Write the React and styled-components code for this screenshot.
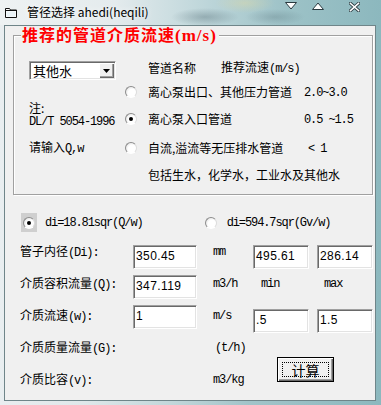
import React from 'react'
import styled, { createGlobalStyle } from 'styled-components'

const CJK = `"Noto Sans CJK SC", "Noto Sans", sans-serif`
const MONO = `"Liberation Mono", "DejaVu Sans Mono", monospace`

const GlobalStyle = createGlobalStyle`
  html, body { margin: 0; padding: 0; background: #8fb9bf; }
  body { font-family: ${CJK}; font-size: 12px; color: #000; }
`

const Window = styled.div`
  width: 381px;
  height: 405px;
  display: flex;
  flex-direction: column;
  overflow: hidden;
  background: linear-gradient(90deg, #e9eef0 0%, #dfe8ea 22%, #c2d7da 45%, #a2c4c9 65%, #8cb8be 100%);
`

const TitleBar = styled.div`
  height: 25px;
  flex: none;
  display: flex;
  align-items: flex-start;
  padding-left: 5px;
  background:
    radial-gradient(ellipse 34px 9px at 205px 17px, rgba(70, 95, 105, 0.35), transparent),
    radial-gradient(ellipse 30px 8px at 275px 17px, rgba(70, 95, 105, 0.25), transparent),
    radial-gradient(ellipse 30px 10px at 245px 3px, rgba(230, 220, 160, 0.4), transparent),
    linear-gradient(90deg, #eef2f3 0%, #e4ebed 30%, #bcd5d9 55%, #9dc2c7 75%, #8cb8be 100%);
`

const AppIcon = styled.svg`
  margin-top: 7px;
  flex: none;
`

const Title = styled.span`
  margin-left: 10px;
  margin-top: 4px;
  font-family: ${CJK};
  font-size: 12px;
  line-height: 16px;
  color: #000;
  text-shadow: 0 0 6px rgba(255, 255, 255, 0.9);
`

const Caption = styled.div`
  margin-left: auto;
  margin-right: 21px;
  margin-top: 2px;
  display: flex;
  align-items: flex-start;
  gap: 15px;
`

const CaptionGlyph = styled.svg`
  display: block;
  margin-left: ${p => p.$ml || 0}px;
`

const Client = styled.div`
  flex: 1;
  margin: 0 5px 4px 4px;
  border: 1px solid #6f8589;
  background: #f0f0f0;
  display: flex;
  flex-direction: column;
`

const Group = styled.fieldset`
  margin: 0 2px 0 8px;
  padding: 0 0 6px 0;
  border: 1px solid #a0a0a0;
  box-shadow: inset 1px 1px 0 #fff, 1px 1px 0 #fff;
  min-width: 0;
`

const Legend = styled.legend`
  margin-left: 7px;
  padding: 0 2px 0 1px;
  line-height: 16px;
  color: #ff0000;
  font-family: ${CJK};
  font-weight: 700;
  font-size: 16px;
  letter-spacing: 1px;
  background: #f0f0f0;
`

const LegendUnit = styled.span`
  font-family: "Liberation Serif", serif;
  font-weight: 700;
  font-size: 17px;
  letter-spacing: 1px;
`

const SpeedGrid = styled.div`
  margin: 12px 0 0 15px;
  display: grid;
  grid-template-columns: 96px 23px 156px 1fr;
  grid-template-rows: 24px 24px 30px 28px 26px;
  align-items: center;
`

const ComboCell = styled.div`
  grid-column: 1;
  grid-row: 1;
  align-self: end;
`

const Combo = styled.div`
  width: 87px;
  height: 19px;
  box-sizing: border-box;
  display: flex;
  align-items: center;
  background: #fff;
  border: 1px solid;
  border-color: #a0a0a0 #fff #fff #a0a0a0;
  box-shadow: inset 1px 1px 0 #696969, inset -1px -1px 0 #e3e3e3;
`

const ComboText = styled.span`
  flex: 1;
  padding-left: 3px;
  font-size: 13px;
  line-height: 15px;
`

const ComboButton = styled.span`
  width: 15px;
  height: 15px;
  margin-right: 1px;
  box-sizing: border-box;
  display: flex;
  align-items: center;
  justify-content: center;
  background: #f0f0f0;
  box-shadow: inset 1px 1px 0 #fff, inset -1px -1px 0 #696969, inset -2px -2px 0 #a0a0a0;
`

const Header = styled.div`
  grid-column: 3 / 5;
  grid-row: 1;
  display: flex;
  gap: 25px;
  align-items: center;
`

const Text = styled.span`
  grid-column: ${p => p.$col || 'auto'};
  grid-row: ${p => p.$row || 'auto'};
  padding-left: ${p => p.$pl || 0}px;
  font-family: ${CJK};
  font-size: 12px;
  line-height: 14px;
  white-space: nowrap;
`

const Ascii = styled.span`
  font-family: ${MONO};
  font-size: 12px;
  letter-spacing: -1.1px;
`

const Note = styled.div`
  grid-column: 1;
  grid-row: 2 / 4;
  align-self: end;
  margin-bottom: 5px;
  display: flex;
  flex-direction: column;
  line-height: 14px;
`

const Radio = styled.span`
  grid-column: ${p => p.$col || 'auto'};
  grid-row: ${p => p.$row || 'auto'};
  margin-left: ${p => p.$ml || 0}px;
  width: 12px;
  height: 12px;
  box-sizing: border-box;
  border-radius: 50%;
  border: 1px solid;
  border-color: #8c8c8c #dcdcdc #fff #8c8c8c;
  background: radial-gradient(circle at 60% 60%, #fff 0 45%, #e4e4e4 80%);
  display: inline-flex;
  align-items: center;
  justify-content: center;
  flex: none;

  &::after {
    content: '';
    width: 4px;
    height: 4px;
    border-radius: 50%;
    background: #000;
    display: ${p => (p.$on ? 'block' : 'none')};
  }
`

const FormulaRow = styled.div`
  margin-top: 18px;
  padding-left: 16px;
  display: flex;
  align-items: center;
  height: 19px;
`

const FocusBox = styled.span`
  width: 16px;
  height: 19px;
  background: #cfcfcf;
  display: flex;
  align-items: center;
  justify-content: center;
`

const Formula = styled.span`
  margin-left: ${p => p.$ml}px;
  font-family: ${MONO};
  font-size: 12px;
  letter-spacing: -1.1px;
  white-space: nowrap;
`

const FormGrid = styled.div`
  margin-top: 4px;
  padding-left: 15px;
  display: grid;
  grid-template-columns: 113px 80px 40px 64px 56px;
  grid-template-rows: repeat(5, 32px);
  align-items: center;
`

const Label = styled.span`
  grid-column: 1;
  font-family: ${CJK};
  font-size: 12px;
  line-height: 14px;
  white-space: nowrap;
`

const Unit = styled.span`
  grid-column: ${p => p.$col || 3};
  padding-left: ${p => p.$pl || 0}px;
  font-family: ${MONO};
  font-size: 12px;
  letter-spacing: -1.1px;
  white-space: nowrap;
`

const TextBox = styled.div`
  grid-column: ${p => p.$col};
  align-self: start;
  margin-top: ${p => p.$top}px;
  width: ${p => p.$w}px;
  height: 24px;
  box-sizing: border-box;
  padding: 2px 0 0 2px;
  background: #fff;
  border: 1px solid;
  border-color: #a0a0a0 #fff #fff #a0a0a0;
  box-shadow: inset 1px 1px 0 #696969, inset -1px -1px 0 #e3e3e3;
  font-family: "Liberation Sans", sans-serif;
  font-size: 12px;
  line-height: 16px;
  letter-spacing: 0.4px;
`

const CalcButton = styled.div`
  grid-column: 4 / 6;
  grid-row: 4 / 6;
  align-self: start;
  margin: 25px 0 0 24px;
  width: 57px;
  height: 25px;
  box-sizing: border-box;
  padding: 4px;
  border: 1px solid #000;
  background: #f0f0f0;
  box-shadow: inset 1px 1px 0 #fff, inset -1px -1px 0 #696969, inset -2px -2px 0 #a0a0a0;
`

const FocusRect = styled.div`
  height: 100%;
  box-sizing: border-box;
  border: 1px dotted #000;
  display: flex;
  align-items: center;
  justify-content: center;
  font-family: ${CJK};
  font-size: 14px;
  line-height: 14px;
`

const Tri = ({ down }) => (
  <CaptionGlyph width="12" height="8" viewBox="0 0 12 8">
    <polygon
      points={down ? '0.5,0.5 11.5,0.5 6,7' : '0.5,7.5 11.5,7.5 6,1'}
      fill="#fff"
      stroke="#2b3a40"
      strokeWidth="1"
    />
  </CaptionGlyph>
)

const speeds = [
  { name: '离心泵出口、其他压力管道', value: '2.0~3.0', on: false },
  { name: '离心泵入口管道', value: '0.5 ~1.5', on: true },
  { name: '自流,溢流等无压排水管道', value: '< 1', on: false, pl: 4 },
]

export default function App() {
  return (
    <>
      <GlobalStyle />
      <Window>
        <TitleBar>
          <AppIcon width="12" height="11" viewBox="0 0 12 11">
            <path d="M0.5 1.5h4l1 1.5h6v7.5h-11z" fill="#fff" stroke="#111" />
            <path d="M1.5 4.5h9v5h-9z" fill="#eaf3f7" />
            <path d="M0.5 3.5h11" stroke="#111" />
          </AppIcon>
          <Title>管径选择 ahedi(heqili)</Title>
          <Caption>
            <Tri down />
            <Tri />
            <CaptionGlyph $ml={10} width="11" height="10" viewBox="0 0 11 10">
              <path d="M1.5 1.5l8 7M9.5 1.5l-8 7" stroke="#2b3a40" strokeWidth="3.2" strokeLinecap="square" />
              <path d="M1.5 1.5l8 7M9.5 1.5l-8 7" stroke="#fff" strokeWidth="1.6" strokeLinecap="square" />
            </CaptionGlyph>
          </Caption>
        </TitleBar>

        <Client>
          <Group>
            <Legend>
              推荐的管道介质流速<LegendUnit>(m/s)</LegendUnit>
            </Legend>
            <SpeedGrid>
              <ComboCell>
                <Combo>
                  <ComboText>其他水</ComboText>
                  <ComboButton>
                    <svg width="7" height="4" viewBox="0 0 7 4">
                      <polygon points="0,0 7,0 3.5,4" fill="#000" />
                    </svg>
                  </ComboButton>
                </Combo>
              </ComboCell>
              <Header>
                <Text>管道名称</Text>
                <Text>推荐流速<Ascii>(m/s)</Ascii></Text>
              </Header>

              {speeds.map((s, i) => (
                <React.Fragment key={s.name}>
                  <Radio $col={2} $row={i + 2} $on={s.on} />
                  <Text $col={3} $row={i + 2}>{s.name}</Text>
                  <Text $col={4} $row={i + 2} $pl={s.pl}>
                    <Ascii>{s.value}</Ascii>
                  </Text>
                </React.Fragment>
              ))}

              <Note>
                <span>注:</span>
                <Ascii>DL/T 5054-1996</Ascii>
              </Note>
              <Text $col={1} $row={4}>请输入<Ascii>Q,w</Ascii></Text>
              <Text $col="3 / 5" $row={5}>包括生水，化学水，工业水及其他水</Text>
            </SpeedGrid>
          </Group>

          <FormulaRow>
            <FocusBox>
              <Radio $on />
            </FocusBox>
            <Formula $ml={8}>di=18.81sqr(Q/w)</Formula>
            <Radio $ml={62} />
            <Formula $ml={10}>di=594.7sqr(Gv/w)</Formula>
          </FormulaRow>

          <FormGrid>
            <Label>管子内径<Ascii>(Di):</Ascii></Label>
            <TextBox $col={2} $top={9} $w={64}>350.45</TextBox>
            <Unit>mm</Unit>
            <TextBox $col={4} $top={9} $w={56}>495.61</TextBox>
            <TextBox $col={5} $top={9} $w={56}>286.14</TextBox>

            <Label>介质容积流量<Ascii>(Q):</Ascii></Label>
            <TextBox $col={2} $top={7} $w={64}>347.119</TextBox>
            <Unit>m3/h</Unit>
            <Unit $col={4} $pl={8}>min</Unit>
            <Unit $col={5} $pl={7}>max</Unit>

            <Label>介质流速<Ascii>(w):</Ascii></Label>
            <TextBox $col={2} $top={5} $w={64}>1</TextBox>
            <Unit>m/s</Unit>
            <TextBox $col={4} $top={9} $w={56}>.5</TextBox>
            <TextBox $col={5} $top={9} $w={56}>1.5</TextBox>

            <Label>介质质量流量<Ascii>(G):</Ascii></Label>
            <Unit $pl={2}>(t/h)</Unit>
            <CalcButton>
              <FocusRect>计算</FocusRect>
            </CalcButton>

            <Label>介质比容<Ascii>(v):</Ascii></Label>
            <Unit>m3/kg</Unit>
          </FormGrid>
        </Client>
      </Window>
    </>
  )
}
